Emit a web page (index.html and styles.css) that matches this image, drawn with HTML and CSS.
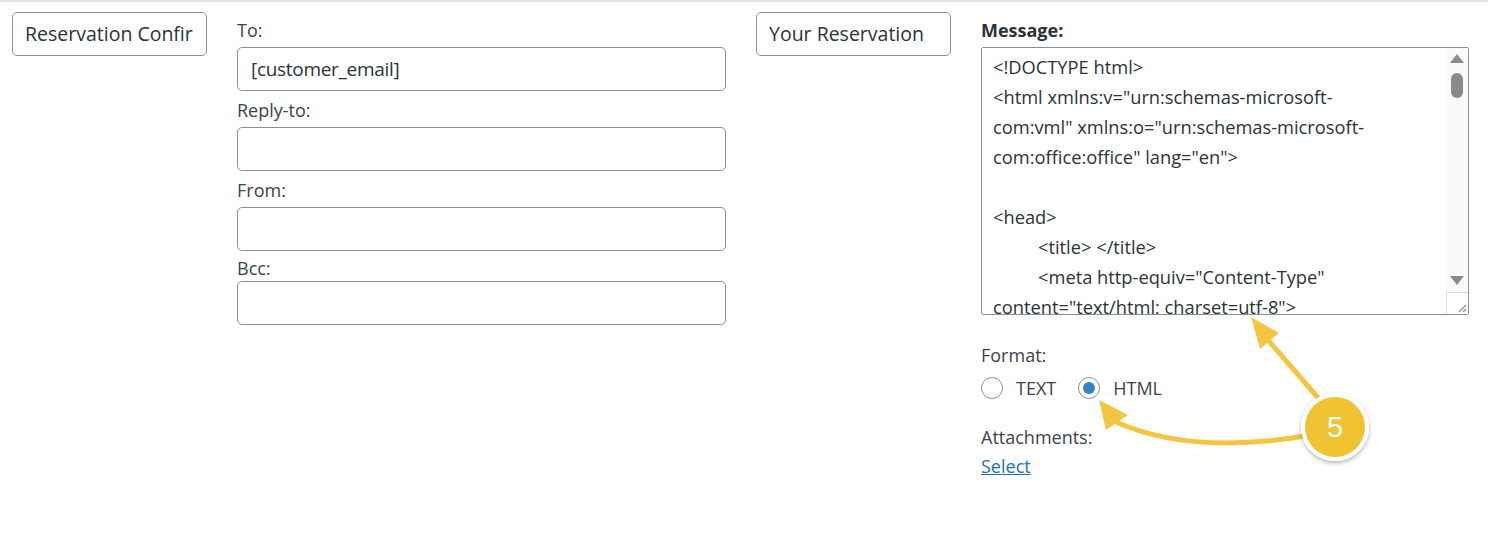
FILE: index.html
```html
<!DOCTYPE html>
<html lang="en">
<head>
<meta charset="utf-8">
<title>Email settings</title>
<link rel="stylesheet" href="styles.css">
</head>
<body>
<div class="page">
  <div class="col">
    <div class="namebox">Reservation Confir</div>
  </div>
  <div class="col fields">
    <div class="lbl lbl-first">To:</div>
    <div class="inp">[customer_email]</div>
    <div class="lbl">Reply-to:</div>
    <div class="inp"></div>
    <div class="lbl">From:</div>
    <div class="inp"></div>
    <div class="lbl lbl-tight">Bcc:</div>
    <div class="inp"></div>
  </div>
  <div class="col">
    <div class="namebox">Your Reservation</div>
  </div>
  <div class="col msg">
    <div class="lbl lbl-first bold">Message:</div>
    <div class="textarea">
      <div class="code">&lt;!DOCTYPE html&gt;
&lt;html xmlns:v="urn:schemas-microsoft-
com:vml" xmlns:o="urn:schemas-microsoft-
com:office:office" lang="en"&gt;

&lt;head&gt;
	&lt;title&gt; &lt;/title&gt;
	&lt;meta http-equiv="Content-Type"
content="text/html; charset=utf-8"&gt;</div>
      <div class="sb">
        <span class="sb-up"></span>
        <span class="sb-thumb"></span>
        <span class="sb-fill"></span>
        <span class="sb-down"></span>
        <span class="sb-corner">
          <svg width="22" height="22" viewBox="0 0 22 22"><path d="M19 12 L12 19 M19 16 L16 19" stroke="#8a8a8a" stroke-width="1.2" fill="none"/></svg>
        </span>
      </div>
    </div>
    <div class="lbl lbl-format">Format:</div>
    <div class="radios">
      <span class="radio"></span><span class="rtext">TEXT</span>
      <span class="radio checked"></span><span class="rtext">HTML</span>
    </div>
    <div class="lbl lbl-att">Attachments:</div>
    <a class="link" href="#">Select</a>
  </div>
  <svg class="annot" width="1488" height="544" viewBox="0 0 1488 544">
    <defs>
      <filter id="sh" x="-30%" y="-30%" width="160%" height="160%">
        <feDropShadow dx="0" dy="2" stdDeviation="2" flood-color="#000" flood-opacity="0.3"/>
      </filter>
    </defs>
    <line x1="1268" y1="340" x2="1320" y2="400" stroke="#f4c542" stroke-width="5"/>
    <polygon points="1251,317 1260,349 1279,333" fill="#f4c542"/>
    <path d="M1116,422 Q1190,455 1305,436" stroke="#f4c542" stroke-width="5" fill="none"/>
    <polygon points="1099,400 1106,430 1128,415" fill="#f4c542"/>
    <circle cx="1335" cy="427" r="34" fill="#fff" filter="url(#sh)"/>
    <circle cx="1335" cy="427" r="30" fill="#f1c232"/>
    <text x="1335" y="437" text-anchor="middle" class="badge-num">5</text>
  </svg>
</div>
</body>
</html>
```
FILE: styles.css
```css
* { box-sizing: border-box; }
html, body { margin: 0; padding: 0; background: #fff; }
body {
  font-family: "Open Sans", "Noto Sans", sans-serif;
  color: #3c434a;
  width: 1488px;
  height: 544px;
  overflow: hidden;
}
.page {
  position: relative;
  border-top: 2px solid #e4e4e4;
  padding: 10px 0 0 12px;
  display: grid;
  grid-template-columns: 195px 489px 195px 488px;
  column-gap: 30px;
  align-items: start;
  height: 544px;
}
.namebox {
  height: 44px;
  border: 1px solid #8c8f94;
  border-radius: 5px;
  padding: 0 12px;
  font-size: 19.5px;
  line-height: 42px;
  color: #2c3338;
  white-space: nowrap;
  overflow: hidden;
}
.lbl {
  font-size: 18px;
  line-height: 24px;
  margin: 7px 0 5px;
  color: #3c434a;
}
.lbl-first { margin-top: 6px; }
.lbl-tight { margin: 5px 0 1px; }
.bold { font-weight: 700; color: #2c3338; }
.inp {
  height: 44px;
  border: 1px solid #8c8f94;
  border-radius: 5px;
  padding: 0 13px;
  font-size: 19px;
  line-height: 42px;
  color: #2c3338;
  letter-spacing: -0.3px;
}
.textarea {
  height: 268px;
  border: 1px solid #8c8f94;
  border-radius: 2px;
  display: grid;
  grid-template-columns: 1fr 22px;
  overflow: hidden;
}
.code {
  white-space: pre;
  overflow: hidden;
  padding: 4px 0 0 11px;
  font-size: 18.3px;
  line-height: 30px;
  color: #2c3338;
  tab-size: 45px;
  -moz-tab-size: 45px;
}
.sb {
  display: flex;
  flex-direction: column;
  align-items: center;
  background: #f9f9f9;
}
.sb-up {
  margin-top: 6px;
  width: 0; height: 0;
  border-left: 7px solid transparent;
  border-right: 7px solid transparent;
  border-bottom: 9px solid #8a8a8a;
}
.sb-thumb {
  margin-top: 10px;
  width: 12px;
  height: 25px;
  border-radius: 6px;
  background: #8a8a8a;
}
.sb-fill { flex: 1; }
.sb-down {
  margin-bottom: 7px;
  width: 0; height: 0;
  border-left: 7px solid transparent;
  border-right: 7px solid transparent;
  border-top: 9px solid #8a8a8a;
}
.sb-corner {
  width: 22px;
  height: 22px;
  background: #fff;
  border-top: 1px solid #dcdcdc;
  border-left: 1px solid #dcdcdc;
  display: block;
  line-height: 0;
}
.lbl-format { margin: 28px 0 0; }
.radios {
  margin-top: 9px;
  display: flex;
  align-items: center;
  height: 24px;
}
.radio {
  width: 22px;
  height: 22px;
  border: 1px solid #8c8f94;
  border-radius: 50%;
  background: #fff;
  display: flex;
  align-items: center;
  justify-content: center;
}
.radio.checked::after {
  content: "";
  width: 12px;
  height: 12px;
  border-radius: 50%;
  background: #3582c4;
}
.rtext {
  font-size: 18px;
  margin: 0 22px 0 13px;
  color: #3c434a;
}
.lbl-att { margin: 25px 0 5px; }
.link {
  display: block;
  font-size: 18px;
  line-height: 24px;
  color: #2271b1;
  text-decoration: underline;
}
.annot {
  position: absolute;
  left: 0;
  top: -2px;
  pointer-events: none;
}
.badge-num {
  font-family: "Liberation Sans", "Open Sans", sans-serif;
  font-size: 29px;
  fill: #fff;
}
```
